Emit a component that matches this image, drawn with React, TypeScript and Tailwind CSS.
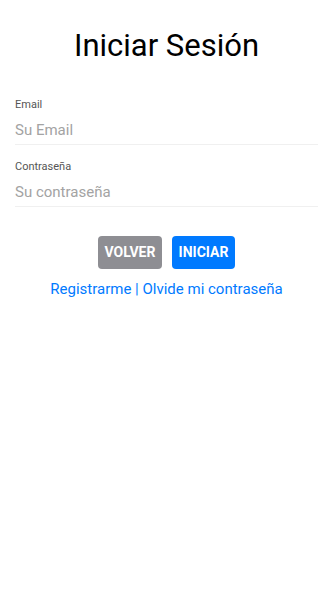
import React from "react";

function Field({ label, placeholder, type }: { label: string; placeholder: string; type: string }) {
  return (
    <div className="flex flex-col border-b border-[#f0f0f0] pb-[2px]">
      <label className="text-[11px] leading-[14px] text-[#555]">{label}</label>
      <input
        type={type}
        placeholder={placeholder}
        className="mt-[6px] h-[24px] bg-transparent text-[15px] text-black outline-none placeholder:text-[#a3a3a3]"
      />
    </div>
  );
}

export default function App() {
  return (
    <div className="min-h-[592px] bg-white px-[15px] font-['Roboto',sans-serif]">
      <h1 className="pt-[26px] text-center text-[31px] leading-[40px] text-black">Iniciar Sesión</h1>
      <div className="mt-[32px] flex flex-col gap-[15px]">
        <Field label="Email" placeholder="Su Email" type="email" />
        <Field label="Contraseña" placeholder="Su contraseña" type="password" />
      </div>
      <div className="mt-[29px] flex justify-center gap-[10px]">
        <button className="h-[33px] w-[64px] rounded-[4px] bg-[#8e8e93] text-[14px] font-bold text-white">VOLVER</button>
        <button className="h-[33px] w-[63px] rounded-[4px] bg-[#007aff] text-[14px] font-bold text-white">INICIAR</button>
      </div>
      <p className="mt-[10px] text-center text-[15px] leading-[20px] text-[#007aff]">
        <a>Registrarme</a> | <a>Olvide mi contraseña</a>
      </p>
    </div>
  );
}
